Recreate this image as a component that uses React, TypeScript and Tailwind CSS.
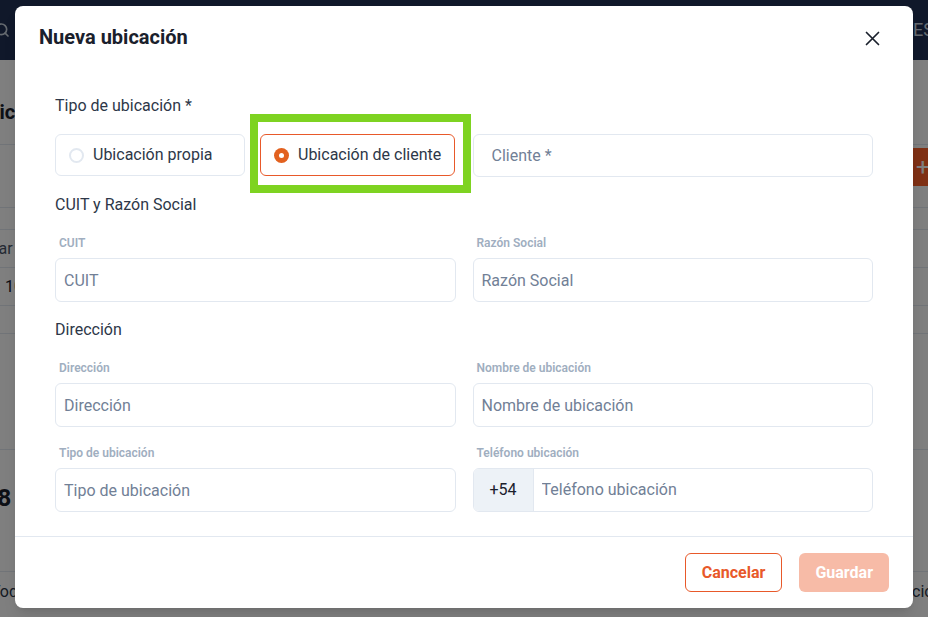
import { Search } from "lucide-react";

function Field({ label, placeholder }: { label: string; placeholder: string }) {
  return (
    <div className="flex flex-col">
      <label className="pl-1 text-xs font-semibold leading-4 text-[#a0aec0]">{label}</label>
      <input
        placeholder={placeholder}
        className="mt-[7px] h-[44px] w-full rounded-md border border-[#e2e8f0] bg-white px-2 text-base text-[#2d3748] outline-none placeholder:text-[#718096]"
      />
    </div>
  );
}

function PhoneField() {
  return (
    <div className="flex flex-col">
      <label className="pl-1 text-xs font-semibold leading-4 text-[#a0aec0]">Teléfono ubicación</label>
      <div className="mt-[7px] flex h-[44px] overflow-hidden rounded-md border border-[#e2e8f0]">
        <span className="flex w-[60px] items-center justify-center border-r border-[#e2e8f0] bg-[#edf2f7] text-base text-[#1a202c]">
          +54
        </span>
        <input
          placeholder="Teléfono ubicación"
          className="flex-1 px-2 text-base text-[#2d3748] outline-none placeholder:text-[#718096]"
        />
      </div>
    </div>
  );
}

function Background() {
  return (
    <div className="flex min-h-screen flex-col bg-white text-[#1a202c]">
      <nav className="flex h-[60px] items-center bg-[#203054]">
        <Search className="-ml-[6px] size-4 text-[#cbd5e0]" strokeWidth={2.5} />
        <span className="ml-auto w-[15px] overflow-hidden whitespace-nowrap text-lg text-[#cbd5e0]">ES</span>
      </nav>
      <div className="h-[85px] border-b border-[#e2e8f0] pt-[40px]">
        <p className="-ml-[25px] text-xl font-bold leading-6">Ubicaciones</p>
      </div>
      <div className="flex h-[63px] items-start border-b border-[#e2e8f0] pt-[3px]">
        <div className="ml-auto flex h-[38px] w-[15px] items-center overflow-hidden bg-[#fe6028] pl-[3px] text-2xl text-white">
          +
        </div>
      </div>
      <div className="h-[22px] border-b border-[#e2e8f0]" />
      <div className="flex h-[38px] items-center border-b border-[#e2e8f0]">
        <span className="-ml-[37px] text-base text-[#4a5568]">Buscar</span>
      </div>
      <div className="flex h-[38px] items-center border-b border-[#e2e8f0]">
        <span className="pl-[5px] text-base">10</span>
      </div>
      <div className="h-[28px] border-b border-[#e2e8f0]" />
      <div className="h-[116px] border-b border-[#e2e8f0]" />
      <div className="flex h-[122px] items-start border-b border-[#e2e8f0] pt-[32px]">
        <span className="-ml-[30px] text-2xl font-bold">128</span>
      </div>
      <div className="flex items-center pt-[8px] text-base text-[#2d3748]">
        <span className="-ml-[9px]">Todos</span>
        <span className="ml-auto w-[16px] overflow-hidden whitespace-nowrap">ciones</span>
      </div>
    </div>
  );
}

export default function App() {
  return (
    <div className="relative h-[617px] w-[928px] overflow-hidden font-['Roboto',sans-serif]">
      <Background />
      <div className="absolute inset-0 flex justify-center bg-black/50 pt-[6px]">
        <div className="flex h-fit w-[898px] flex-col rounded-lg bg-white shadow-lg">
          <div className="flex h-[62px] items-center justify-between pl-6 pr-[33px]">
            <h2 className="text-xl font-bold leading-7 text-[#1a202c]">Nueva ubicación</h2>
            <svg width="15" height="15" viewBox="0 0 15 15" className="mt-[2px] text-[#1a202c]">
              <path d="M1.5 1.5l12 12M13.5 1.5l-12 12" stroke="currentColor" strokeWidth="1.7" strokeLinecap="round" />
            </svg>
          </div>

          <div className="flex flex-col px-10 pb-6 pt-[26px]">
            <p className="text-base leading-6 text-[#2d3748]">Tipo de ubicación *</p>
            <div className="mt-[16px] grid grid-cols-2 items-start gap-x-[17px]">
              <div className="flex gap-[15px]">
                <div className="flex h-[42px] w-[190px] items-center gap-[9px] rounded-md border border-[#e2e8f0] pl-[13px] text-base text-[#2d3748]">
                  <span className="size-[15px] rounded-full border-2 border-[#e2e8f0] bg-white" />
                  Ubicación propia
                </div>
                <div className="relative flex h-[42px] w-[195px] items-center gap-[9px] rounded-md border border-[#e8592a] pl-[13px] text-base text-[#2d3748]">
                  <span className="flex size-[15px] items-center justify-center rounded-full bg-[#e2611f]">
                    <span className="size-[5px] rounded-full bg-white" />
                  </span>
                  Ubicación de cliente
                  <div className="pointer-events-none absolute -left-[11px] -top-[21px] h-[79px] w-[221px] border-8 border-[#7ed321]" />
                </div>
              </div>
              <input
                placeholder="Cliente *"
                className="h-[43px] w-full rounded-md border border-[#e2e8f0] pl-[18px] text-base outline-none placeholder:text-[#718096]"
              />
            </div>

            <p className="mt-4 text-base leading-6 text-[#2d3748]">CUIT y Razón Social</p>
            <div className="mt-[18px] grid grid-cols-2 gap-x-[17px]">
              <Field label="CUIT" placeholder="CUIT" />
              <Field label="Razón Social" placeholder="Razón Social" />
            </div>

            <p className="mt-4 text-base leading-6 text-[#2d3748]">Dirección</p>
            <div className="mt-[18px] grid grid-cols-2 gap-x-[17px] gap-y-[18px]">
              <Field label="Dirección" placeholder="Dirección" />
              <Field label="Nombre de ubicación" placeholder="Nombre de ubicación" />
              <Field label="Tipo de ubicación" placeholder="Tipo de ubicación" />
              <PhoneField />
            </div>
          </div>

          <div className="flex justify-end gap-[17px] border-t border-[#e2e8f0] px-6 py-4">
            <button className="h-[39px] rounded-md border border-[#e8592a] px-4 text-base font-bold text-[#e8592a]">
              Cancelar
            </button>
            <button className="h-[39px] rounded-md bg-[#f7bba7] px-4 text-base font-bold text-white">
              Guardar
            </button>
          </div>
        </div>
      </div>
    </div>
  );
}
